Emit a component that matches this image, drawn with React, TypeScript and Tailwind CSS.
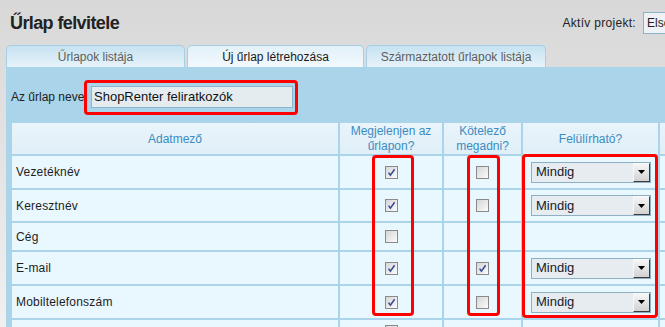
import React from "react";

const FONT = { fontFamily: '"Liberation Sans", Arial, sans-serif' };

type Row = {
  label: string;
  h: string;
  show: boolean;
  req: boolean;
  select: boolean;
};

const rows: Row[] = [
  { label: "Vezetéknév", h: "h-[32px]", show: true, req: false, select: true },
  { label: "Keresztnév", h: "h-[31px]", show: true, req: false, select: true },
  { label: "Cég", h: "h-[27px]", show: false, req: false, select: false },
  { label: "E-mail", h: "h-[32px]", show: true, req: true, select: true },
  { label: "Mobiltelefonszám", h: "h-[32px]", show: true, req: false, select: true },
];

function Check({ checked }: { checked: boolean }) {
  return (
    <span className="flex h-[13px] w-[13px] items-center justify-center border border-[#8a8a8a] bg-gradient-to-br from-[#d6d6d6] to-[#fbfbfb]">
      {checked && (
        <svg width="9" height="9" viewBox="0 0 9 9">
          <path d="M1.6 4.6 L3.4 7.2 L7.6 1.2" stroke="#34489a" strokeWidth="1.5" fill="none" />
        </svg>
      )}
    </span>
  );
}

function Select() {
  return (
    <div className="ml-[8px] flex h-[21px] w-[120px] items-center border border-[#8fb0c4] bg-[#e6ecef] pl-[4px] text-[13px] text-[#15202e]">
      <span className="flex-1">Mindig</span>
      <span className="flex h-[19px] w-[17px] items-center justify-center border border-t-[#f8f8f8] border-l-[#f8f8f8] border-r-[#3c3c3c] border-b-[#3c3c3c] bg-gradient-to-b from-[#f6f6f6] to-[#d2d2d2]">
        <svg width="7" height="4" viewBox="0 0 7 4">
          <path d="M0 0 H7 L3.5 4 Z" fill="#000" />
        </svg>
      </span>
    </div>
  );
}

export default function App() {
  const tabs = [
    { t: "Űrlapok listája", w: "w-[179px]", active: false },
    { t: "Új űrlap létrehozása", w: "w-[177px]", active: true },
    { t: "Származtatott űrlapok listája", w: "w-[180px]", active: false },
  ];

  return (
    <div
      style={FONT}
      className="relative flex h-[327px] w-[665px] flex-col overflow-hidden bg-gradient-to-b from-[#d8d8d8] to-[#f0f0f0] text-[#222]"
    >
      {/* header */}
      <div className="flex h-[45px] items-start justify-between">
        <h1 className="mt-[10px] ml-[10px] text-[18px] font-bold tracking-[-0.6px] text-[#222]">
          Űrlap felvitele
        </h1>
        <div className="mt-[12px] mr-[-90px] flex shrink-0 items-center">
          <span className="text-[12px] tracking-[0.3px] text-[#222]">Aktív projekt:</span>
          <div className="ml-[7px] flex h-[22px] w-[112px] items-center border border-[#8db3cb] bg-[#eef2f4] pl-[3px] text-[12px]">
            Első projekt
          </div>
        </div>
      </div>

      {/* tabs */}
      <div className="flex h-[22px] gap-[2px] pl-[6px]">
        {tabs.map((tab) => (
          <div
            key={tab.t}
            className={`${tab.w} flex items-center justify-center rounded-t-[5px] border border-b-0 border-[#a4cfe4] text-[12px] ${
              tab.active
                ? "bg-gradient-to-b from-[#e2f1f9] to-[#f2f9fd] text-[#1a1a1a]"
                : "bg-gradient-to-b from-[#c6e2f1] to-[#e6f3fa] text-[#5e5e5e]"
            }`}
          >
            {tab.t}
          </div>
        ))}
      </div>

      {/* panel */}
      <div className="ml-[6px] flex-1 overflow-hidden bg-[#a9d4e9]">
        <div className="flex items-center pt-[19px] pl-[5px]">
          <span className="w-[80px] text-[12px]">Az űrlap neve:</span>
          <div className="flex h-[22px] w-[202px] items-center border border-[#8ab5cc] bg-[#e4ecf0] pl-[2px] text-[13px] text-[#111]">
            ShopRenter feliratkozók
          </div>
        </div>

        <div className="mt-[15px] ml-[6px] grid w-[800px] grid-cols-[326px_102px_77px_135px_150px] gap-[2px]">
          <div className="flex h-[31px] items-center justify-center bg-gradient-to-b from-[#e9f4fb] to-[#e0eff8] text-[12px] text-[#3a8cc2]">
            Adatmező
          </div>
          <div className="flex h-[31px] items-center justify-center bg-gradient-to-b from-[#e9f4fb] to-[#e0eff8] text-center text-[12px] leading-[15px] text-[#3a8cc2]">
            Megjelenjen az
            <br />
            űrlapon?
          </div>
          <div className="flex h-[31px] items-center justify-center bg-gradient-to-b from-[#e9f4fb] to-[#e0eff8] text-center text-[12px] leading-[15px] text-[#3a8cc2]">
            Kötelező
            <br />
            megadni?
          </div>
          <div className="flex h-[31px] items-center justify-center bg-gradient-to-b from-[#e9f4fb] to-[#e0eff8] text-[12px] text-[#3a8cc2]">
            Felülírható?
          </div>
          <div className="h-[31px] bg-gradient-to-b from-[#e9f4fb] to-[#e0eff8]" />

          {rows.map((r) => (
            <React.Fragment key={r.label}>
              <div className={`${r.h} flex items-center bg-[#e9f7fe] pl-[4px] text-[12px] tracking-[0.2px] text-[#1e1e1e]`}>
                {r.label}
              </div>
              <div className={`${r.h} flex items-center justify-center bg-[#e9f7fe]`}>
                <Check checked={r.show} />
              </div>
              <div className={`${r.h} flex items-center justify-center bg-[#e9f7fe]`}>
                {r.select && <Check checked={r.req} />}
              </div>
              <div className={`${r.h} flex items-center bg-[#e9f7fe]`}>{r.select && <Select />}</div>
              <div className={`${r.h} bg-[#e9f7fe]`} />
            </React.Fragment>
          ))}

          {/* next row, cut off by the window */}
          <div className="h-[32px] bg-[#e9f7fe]" />
          <div className="flex h-[32px] items-start justify-center bg-[#e9f7fe] pt-[5px]">
            <Check checked={false} />
          </div>
          <div className="h-[32px] bg-[#e9f7fe]" />
          <div className="h-[32px] bg-[#e9f7fe]" />
          <div className="h-[32px] bg-[#e9f7fe]" />
        </div>
      </div>

      {/* red annotation frames */}
      <div className="absolute top-[80px] left-[84px] h-[35px] w-[214px] rounded-[4px] border-[3px] border-[#ff0000]" />
      <div className="absolute top-[155px] left-[372px] h-[161px] w-[42px] rounded-[4px] border-[3px] border-[#ff0000]" />
      <div className="absolute top-[155px] left-[467px] h-[161px] w-[33px] rounded-[4px] border-[3px] border-[#ff0000]" />
      <div className="absolute top-[154px] left-[522px] h-[164px] w-[136px] rounded-[4px] border-[3px] border-[#ff0000]" />
    </div>
  );
}
